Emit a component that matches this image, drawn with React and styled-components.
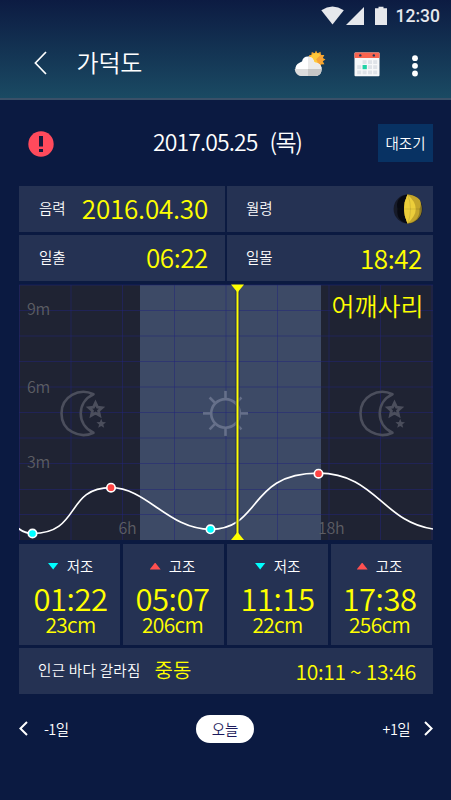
import React from "react";
import styled, { createGlobalStyle } from "styled-components";

const tides = [
  { type: "low", label: "저조", time: "01:22", level: "23cm", shift: 1 },
  { type: "high", label: "고조", time: "05:07", level: "206cm", shift: -1 },
  { type: "low", label: "저조", time: "11:15", level: "22cm", shift: 0 },
  { type: "high", label: "고조", time: "17:38", level: "256cm", shift: -2 },
];

const gridX = [0.5, 52, 103.5, 155.5, 207, 258.5, 310, 361.5, 413];
const gridY = [1, 26.5, 52, 77.5, 103, 128.5, 154, 179.5, 205.5, 230.5];

const points = [
  { x: 13.5, y: 249.5, type: "low" },
  { x: 92, y: 203.7, type: "high" },
  { x: 191.5, y: 245.3, type: "low" },
  { x: 299.5, y: 189.7, type: "high" },
];

const Night = ({ x }) => (
  <g transform={`translate(${x} 0)`} fill="none" stroke="#4b4e5c">
    <path
      d="M74.5 110.2 C60 103.500 42.500 112.500 42.500 129.400 C42.500 146.500 60 155.400 74.500 148.700 C57.500 141 57.500 118 74.500 110.200 Z"
      strokeWidth="2.6"
      strokeLinejoin="round"
    />
    <path
      d="M76.500 118.800 L78.500 123.200 L83 123.700 L79.600 126.800 L80.600 131.400 L76.500 129.100 L72.400 131.400 L73.400 126.800 L70 123.700 L74.500 123.200 Z"
      strokeWidth="2.8"
    />
    <path
      d="M82.200 134.800 L83.500 138 L87 138.200 L84.300 140.400 L85.200 143.800 L82.200 141.900 L79.200 143.800 L80.100 140.400 L77.400 138.200 L80.900 138 Z"
      fill="#4b4e5c"
      stroke="none"
    />
  </g>
);

const Sun = () => (
  <g stroke="#66708a" strokeWidth="2.6" fill="none">
    <circle cx="206.500" cy="129.400" r="14.300" />
    {[0, 45, 90, 135, 180, 225, 270, 315].map((a) => (
      <line
        key={a}
        x1="221"
        x2="229"
        y1="129.400"
        y2="129.400"
        transform={`rotate(${a} 206.500 129.400)`}
      />
    ))}
  </g>
);

const TideChart = () => (
  <Chart viewBox="0 0 414 256">
    <rect y="1" width="414" height="255" fill="#1f2333" />
    <rect x="121" y="1" width="181" height="255" fill="#3d4a66" />
    <g stroke="#22237a" strokeOpacity="0.5">
      {gridX.map((x) => (
        <line key={x} x1={x} x2={x} y1="1" y2="256" />
      ))}
      {gridY.map((y) => (
        <line key={y} x1="0" x2="414" y1={y} y2={y} />
      ))}
    </g>
    <AxisText x="8" y="31">9m</AxisText>
    <AxisText x="8" y="108.500">6m</AxisText>
    <AxisText x="8" y="183.500">3m</AxisText>
    <AxisText x="99.500" y="249.500">6h</AxisText>
    <AxisText x="299" y="249.500">18h</AxisText>
    <Night x={0} />
    <Sun />
    <Night x={299} />
    <path
      d="M-0.500 244.500 C4 248 8 249.500 13.500 249.500 C62 249.500 46 203.700 92 203.700 C128 203.700 149 245.300 191.500 245.300 C243 245.300 228 189.200 299.500 189.200 C356 189.200 364 238 414 245"
      fill="none"
      stroke="#fff"
      strokeWidth="1.7"
    />
    <line x1="218.500" x2="218.500" y1="1" y2="256" stroke="#1b2450" strokeWidth="4" strokeOpacity="0.7" />
    <line x1="218.500" x2="218.500" y1="1" y2="256" stroke="#ff0" strokeWidth="2" />
    <path d="M212 0.500 H225 L218.500 8.500 Z" fill="#ff0" />
    <path d="M212 256 H225 L218.500 248 Z" fill="#ff0" />
    {points.map((p) => (
      <circle
        key={p.x}
        cx={p.x}
        cy={p.y}
        r="4.200"
        fill={p.type === "low" ? "#00ffff" : "#ff4343"}
        stroke="#fff"
        strokeWidth="1.700"
      />
    ))}
    <ChartTitle x="312.500" y="32">어깨사리</ChartTitle>
  </Chart>
);

const WeatherIcon = () => (
  <svg width="32" height="27" viewBox="0 0 32 27">
    <path
      d="M22 0.500 L23.500 3.300 L26.500 1.700 L27 5 L30.400 5 L28.800 8 L31.500 9.500 L28.800 11.300 L30.400 14.300 L27 14.400 L26.500 17.500 L22 16 L15 8 L15.300 5 L17.300 5 L17.800 1.900 L20.700 3.300 Z"
      fill="#f5a52c"
    />
    <circle cx="22.200" cy="9.300" r="6.200" fill="#ffc83a" />
    <path d="M22.200 9.300 L27 4.500 A6.500 6.500 0 0 1 25 15 Z" fill="#f7a136" />
    <path
      d="M7.500 26 A7 7 0 0 1 5.500 12.700 Q7 12 8 11.500 Q9 6.500 14 6.500 Q19 6.500 20.500 12.500 Q27.500 13 27.500 19.300 Q27.500 26 21 26 Z"
      fill="#fff"
    />
    <path d="M0.700 19 H27.500 Q27.500 26 21 26 H7.500 Q1.500 25.500 0.700 19 Z" fill="#dcdcdc" />
    <path d="M14 6.500 Q19 6.500 20.500 12.500 Q27.500 13 27.500 19.300 H14 Z" fill="#ebebeb" />
    <path d="M14 19 H27.500 Q27.500 26 21 26 H14 Z" fill="#c6c6c6" />
  </svg>
);

const CalendarIcon = () => (
  <svg width="26" height="25" viewBox="0 0 26 25">
    <rect x="0.500" y="0.500" width="25" height="23.700" rx="1" fill="#f7f8f9" />
    <path d="M0.500 6 V1.500 Q0.500 0.500 1.500 0.500 H24.500 Q25.500 0.500 25.500 1.500 V6 Z" fill="#fa644f" />
    <circle cx="6.300" cy="3.400" r="1.200" fill="#22375a" />
    <circle cx="19.800" cy="3.400" r="1.200" fill="#22375a" />
    <g fill="#dfe3e8">
      {[8.2, 13.2, 18.5].map((y, row) =>
        [3.2, 8.6, 14, 19.2]
          .filter((x) => !(row === 0 && x < 4))
          .map((x) => <rect key={`${x}-${y}`} x={x} y={y} width="4" height="3.800" />)
      )}
    </g>
    <rect x="8.600" y="13" width="4.200" height="4.200" fill="#1fd3a5" />
  </svg>
);

const MoonPhase = () => (
  <svg width="30" height="30" viewBox="0 0 30 30">
    <circle cx="15" cy="15" r="14.400" fill="#161a28" />
    <path d="M14.500 0.600 Q2 3 4.500 15 Q3 27 14.500 29.400 Z" fill="#080a12" />
    <path d="M14.500 0.600 A14.400 14.400 0 0 1 14.500 29.400 Q7.500 15 14.500 0.600 Z" fill="#8f7c25" />
    <path d="M14.500 0.600 Q32 3 26.500 15 Q27 27 14.500 29.400 Q7.500 15 14.500 0.600 Z" fill="#c3a52b" />
    <path d="M14.500 0.600 Q31 15 14.500 29.400 Q7.500 15 14.500 0.600 Z" fill="#ecce3a" />
    <path d="M1 15 H29 M15 1 Q20 15 15 29" fill="none" stroke="#3a3314" strokeOpacity="0.250" strokeWidth="0.500" />
  </svg>
);

const Chevron = ({ width, height, next, stroke }) => (
  <svg width={width} height={height} viewBox={`0 0 ${width} ${height}`}>
    <polyline
      points={
        next
          ? `1,1 ${width - 1.4},${height / 2} 1,${height - 1}`
          : `${width - 1},1 1.4,${height / 2} ${width - 1},${height - 1}`
      }
      fill="none"
      stroke="#fff"
      strokeWidth={stroke}
    />
  </svg>
);

const App = () => {
  return (
    <Screen>
      <GlobalStyle />
      <Header>
        <StatusBar>
          <svg width="67" height="20" viewBox="0 0 67 20" fill="#e6e8ec">
            <path d="M0.300 4.200 Q11.500 -3 22.800 4.200 L11.500 18.500 Z" />
            <path d="M25 19 L43 1 V19 Z" />
            <path d="M54 2.300 H57.500 V0.700 H62.500 V2.300 H66 V19 H54 Z" />
          </svg>
          <Clock>12:30</Clock>
        </StatusBar>
        <Toolbar>
          <Chevron width={13} height={24} stroke={1.7} />
          <Title>가덕도</Title>
          <Actions>
            <WeatherIcon />
            <CalendarIcon />
            <svg width="8" height="24" viewBox="0 0 8 24" fill="#fff">
              <circle cx="4" cy="4.200" r="2.900" />
              <circle cx="4" cy="11.800" r="2.900" />
              <circle cx="4" cy="19.500" r="2.900" />
            </svg>
          </Actions>
        </Toolbar>
      </Header>

      <Main>
        <DateRow>
          <AlertIcon viewBox="0 0 26 26">
            <circle cx="13" cy="13" r="12.700" fill="#ff4a5c" />
            <path d="M11 5 H15 V15.500 H11 Z M11 18 H15 V21 H11 Z" fill="#14193d" />
          </AlertIcon>
          <DateText>
            <span>2017.05.25</span>
            <Weekday>(목)</Weekday>
          </DateText>
          <Badge>대조기</Badge>
        </DateRow>

        <InfoGrid>
          <Info>
            <Label>음력</Label>
            <Value $spacing="-0.2px">2016.04.30</Value>
          </Info>
          <Info $right>
            <Label>월령</Label>
            <MoonPhase />
          </Info>
          <Info>
            <Label>일출</Label>
            <Value $spacing="-0.4px">06:22</Value>
          </Info>
          <Info $right>
            <Label>일몰</Label>
            <Value $spacing="-0.4px" $down>
              18:42
            </Value>
          </Info>
        </InfoGrid>

        <TideChart />

        <TideGrid>
          {tides.map((t) => (
            <Tide key={t.time} $shift={t.shift}>
              <TideLabel>
                <Marker $type={t.type} />
                {t.label}
              </TideLabel>
              <TideTime>{t.time}</TideTime>
              <TideLevel>{t.level}</TideLevel>
            </Tide>
          ))}
        </TideGrid>

        <Nearby>
          <NearbyLabel>인근 바다 갈라짐</NearbyLabel>
          <Place>중동</Place>
          <Range>10:11 ~ 13:46</Range>
        </Nearby>

        <DayNav>
          <DayButton>
            <Chevron width={9} height={15} stroke={2} />
            <span>-1일</span>
          </DayButton>
          <Today>오늘</Today>
          <DayButton $next>
            <span>+1일</span>
            <Chevron width={9} height={15} stroke={2} next />
          </DayButton>
        </DayNav>
      </Main>
    </Screen>
  );
};

const GlobalStyle = createGlobalStyle`
  * {
    box-sizing: border-box;
  }

  body {
    margin: 0;
    background: #0b1a41;
  }

  svg {
    display: block;
    flex-shrink: 0;
  }

  button {
    border: 0;
    padding: 0;
    background: none;
    color: inherit;
    font: inherit;
  }
`;

const Screen = styled.div`
  width: 451px;
  height: 800px;
  overflow: hidden;
  background: #0b1a41;
  color: #fff;
  font-family: "Noto Sans CJK KR", sans-serif;
  font-weight: 350;
  white-space: nowrap;
`;

const Header = styled.header`
  height: 100px;
  background: linear-gradient(#0c1b42, #1a4a63);
  border-bottom: 2px solid #3a5068;
`;

const StatusBar = styled.div`
  display: flex;
  align-items: center;
  justify-content: flex-end;
  gap: 8px;
  height: 32px;
  padding-right: 11px;
`;

const Clock = styled.span`
  font-family: Roboto, sans-serif;
  font-size: 17.5px;
  font-weight: 500;
  color: #e6e8ec;
  padding-bottom: 1px;
`;

const Toolbar = styled.div`
  display: flex;
  align-items: center;
  height: 62px;
  padding: 0 32px 0 34px;
`;

const Title = styled.h1`
  margin: 0 0 0 29.5px;
  font-size: 24px;
  line-height: 30px;
  font-weight: 350;
  letter-spacing: -0.2px;
  padding-bottom: 2px;
`;

const Actions = styled.div`
  display: flex;
  align-items: center;
  margin-left: auto;

  svg:nth-child(2) {
    margin: 3px 31px 0 28px;
  }

  svg:nth-child(3) {
    margin-top: 5px;
  }
`;

const Main = styled.main`
  padding: 24px 18px 0 19px;
`;

const DateRow = styled.div`
  display: grid;
  grid-template-columns: 125px 1fr 55px;
  align-items: center;
  height: 38px;
  padding-left: 9px;
`;

const AlertIcon = styled.svg`
  width: 26px;
  height: 26px;
  margin-top: 2px;
`;

const DateText = styled.div`
  display: flex;
  gap: 12px;
  padding-bottom: 4px;
  font-size: 23px;
  line-height: 30px;
  letter-spacing: -0.9px;
`;

const Weekday = styled.span`
  letter-spacing: -1.5px;
`;

const Badge = styled.div`
  height: 38px;
  background: #083263;
  font-size: 14.5px;
  line-height: 38px;
  text-align: center;
`;

const InfoGrid = styled.div`
  display: grid;
  grid-template-columns: 206px 206px;
  grid-template-rows: 46px 46px;
  gap: 3px 2px;
  margin-top: 24px;
`;

const Info = styled.div`
  display: flex;
  align-items: center;
  justify-content: space-between;
  padding: 0 ${(p) => (p.$right ? "10px 0 19px" : "16px 0 20px")};
  background: #253253;
`;

const Label = styled.span`
  font-size: 14.5px;
  padding-bottom: 3px;
`;

const Value = styled.span`
  font-size: 26px;
  line-height: 36px;
  color: #ff0;
  letter-spacing: ${(p) => p.$spacing};
  padding-right: 1px;
  padding-bottom: ${(p) => (p.$down ? "0" : "2px")};
`;

const Chart = styled.svg`
  width: 414px;
  height: 256px;
  margin-top: 3px;
`;

const AxisText = styled.text`
  font-size: 16px;
  letter-spacing: -0.3px;
  fill: #5c5d63;
`;

const ChartTitle = styled.text`
  font-size: 25px;
  fill: #ff0;
`;

const TideGrid = styled.div`
  display: grid;
  grid-template-columns: repeat(4, 101px);
  gap: 3px;
  margin-top: 4px;
`;

const Tide = styled.div`
  height: 101px;
  padding-top: 12px;
  padding-left: ${(p) => Math.max(p.$shift * 2, 0)}px;
  padding-right: ${(p) => Math.max(p.$shift * -2, 0)}px;
  background: #253253;
  text-align: center;
`;

const TideLabel = styled.div`
  display: flex;
  align-items: center;
  justify-content: center;
  gap: 8px;
  font-size: 14.5px;
  line-height: 20px;
`;

const Marker = styled.span`
  width: 11px;
  height: 7px;
  background: ${(p) => (p.$type === "low" ? "#00ffff" : "#ff5050")};
  clip-path: ${(p) =>
    p.$type === "low"
      ? "polygon(0 0, 100% 0, 50% 100%)"
      : "polygon(50% 0, 100% 100%, 0 100%)"};
`;

const TideTime = styled.div`
  margin-top: 6px;
  font-size: 31px;
  line-height: 31px;
  letter-spacing: -0.5px;
  color: #ff0;
`;

const TideLevel = styled.div`
  font-size: 21px;
  line-height: 23px;
  letter-spacing: -0.7px;
  color: #ff0;
`;

const Nearby = styled.div`
  display: flex;
  align-items: center;
  height: 46px;
  margin-top: 3px;
  padding: 0 17px 0 19px;
  background: #253253;
`;

const NearbyLabel = styled(Label)`
  letter-spacing: 0.3px;
`;

const Place = styled.span`
  margin-left: 14px;
  padding-bottom: 4px;
  font-size: 20px;
  color: #ff0;
`;

const Range = styled.span`
  margin-left: auto;
  font-size: 21px;
  letter-spacing: -0.3px;
  color: #ff0;
`;

const DayNav = styled.nav`
  display: flex;
  align-items: center;
  justify-content: space-between;
  height: 28px;
  margin-top: 21px;
`;

const DayButton = styled.button`
  display: flex;
  align-items: center;
  gap: ${(p) => (p.$next ? "14px" : "16px")};
  font-size: 14.5px;
  letter-spacing: -0.6px;
  padding-bottom: 2px;
`;

const Today = styled.button`
  width: 58px;
  height: 28px;
  margin-right: 1px;
  border-radius: 14px;
  background: #fff;
  color: #1c1a5c;
  font-size: 14.5px;
  line-height: 26px;
`;

export default App;
